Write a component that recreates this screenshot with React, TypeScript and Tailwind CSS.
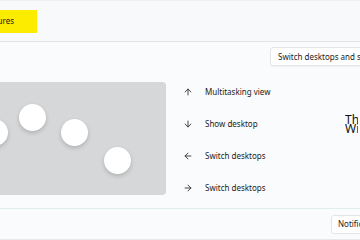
import React from 'react';
import { ArrowUp, ArrowDown, ArrowLeft, ArrowRight } from 'lucide-react';

const shortcuts = [
  { Icon: ArrowUp, label: 'Multitasking view' },
  { Icon: ArrowDown, label: 'Show desktop' },
  { Icon: ArrowLeft, label: 'Switch desktops' },
  { Icon: ArrowRight, label: 'Switch desktops' },
];

function Dot({ x, y }: { x: number; y: number }) {
  return (
    <div
      className="absolute w-[27px] h-[27px] rounded-full bg-white shadow-[0_2px_4px_rgba(0,0,0,0.18)]"
      style={{ left: x - 13.5, top: y - 13.5 }}
    />
  );
}

export default function App() {
  return (
    <div
      className="w-[360px] h-[240px] overflow-hidden bg-[#eef0f3] text-[#1b1b1b] flex flex-col"
      style={{ fontFamily: '"Noto Sans", "Open Sans", sans-serif' }}
    >
      {/* top strip */}
      <div className="h-[41px] mt-px bg-[#f8f9fb] border-b border-[#e2e5e8] flex items-center shrink-0">
        <div className="ml-[-40px] w-[77px] h-[23px] bg-[#fbec00] flex items-center justify-end pr-[23px] text-[8px]">
          Features
        </div>
      </div>

      {/* main section */}
      <div className="h-[167px] bg-[#fafbfc] border-b border-[#e1ecec] shrink-0 flex flex-col">
        <div className="flex pt-[5px]">
          <div className="ml-[270px] h-[19px] px-[7px] rounded-[3px] bg-white border border-[#e3e5e8] shadow-[0_1px_1px_rgba(0,0,0,0.04)] flex items-center text-[8px] whitespace-nowrap shrink-0">
            Switch desktops and show desktop
          </div>
        </div>

        <div className="flex mt-[16px]">
          <div className="relative ml-[-20px] w-[186px] h-[113px] rounded-[4px] bg-[#d5d7d9] overflow-hidden shrink-0">
            <Dot x={14} y={50} />
            <Dot x={52} y={35} />
            <Dot x={94.5} y={50} />
            <Dot x={137} y={78} />
          </div>

          <div className="flex flex-col pl-[17px] pt-[4px] gap-[20px] shrink-0">
            {shortcuts.map(({ Icon, label }, i) => (
              <div key={i} className="flex items-center h-[12px] text-[8px] whitespace-nowrap">
                <Icon size={10} strokeWidth={2} className="text-[#222]" />
                <span className="ml-[12px]">{label}</span>
              </div>
            ))}
          </div>

          <div className="ml-auto mr-[2px] w-[13px] overflow-hidden pt-[33px] shrink-0">
            <div className="text-[12px] leading-[9px] whitespace-nowrap text-[#111]">
              <div>These shortcuts</div>
              <div>Windows</div>
            </div>
          </div>
        </div>
      </div>

      {/* bottom section */}
      <div className="h-[31px] bg-[#fafbfc] border-b border-[#e6e8eb] shrink-0 flex items-center">
        <div className="ml-[331px] h-[19px] px-[6px] rounded-[3px] bg-white border border-[#e3e5e8] flex items-center text-[8px] whitespace-nowrap shrink-0">
          Notifications
        </div>
      </div>
    </div>
  );
}
